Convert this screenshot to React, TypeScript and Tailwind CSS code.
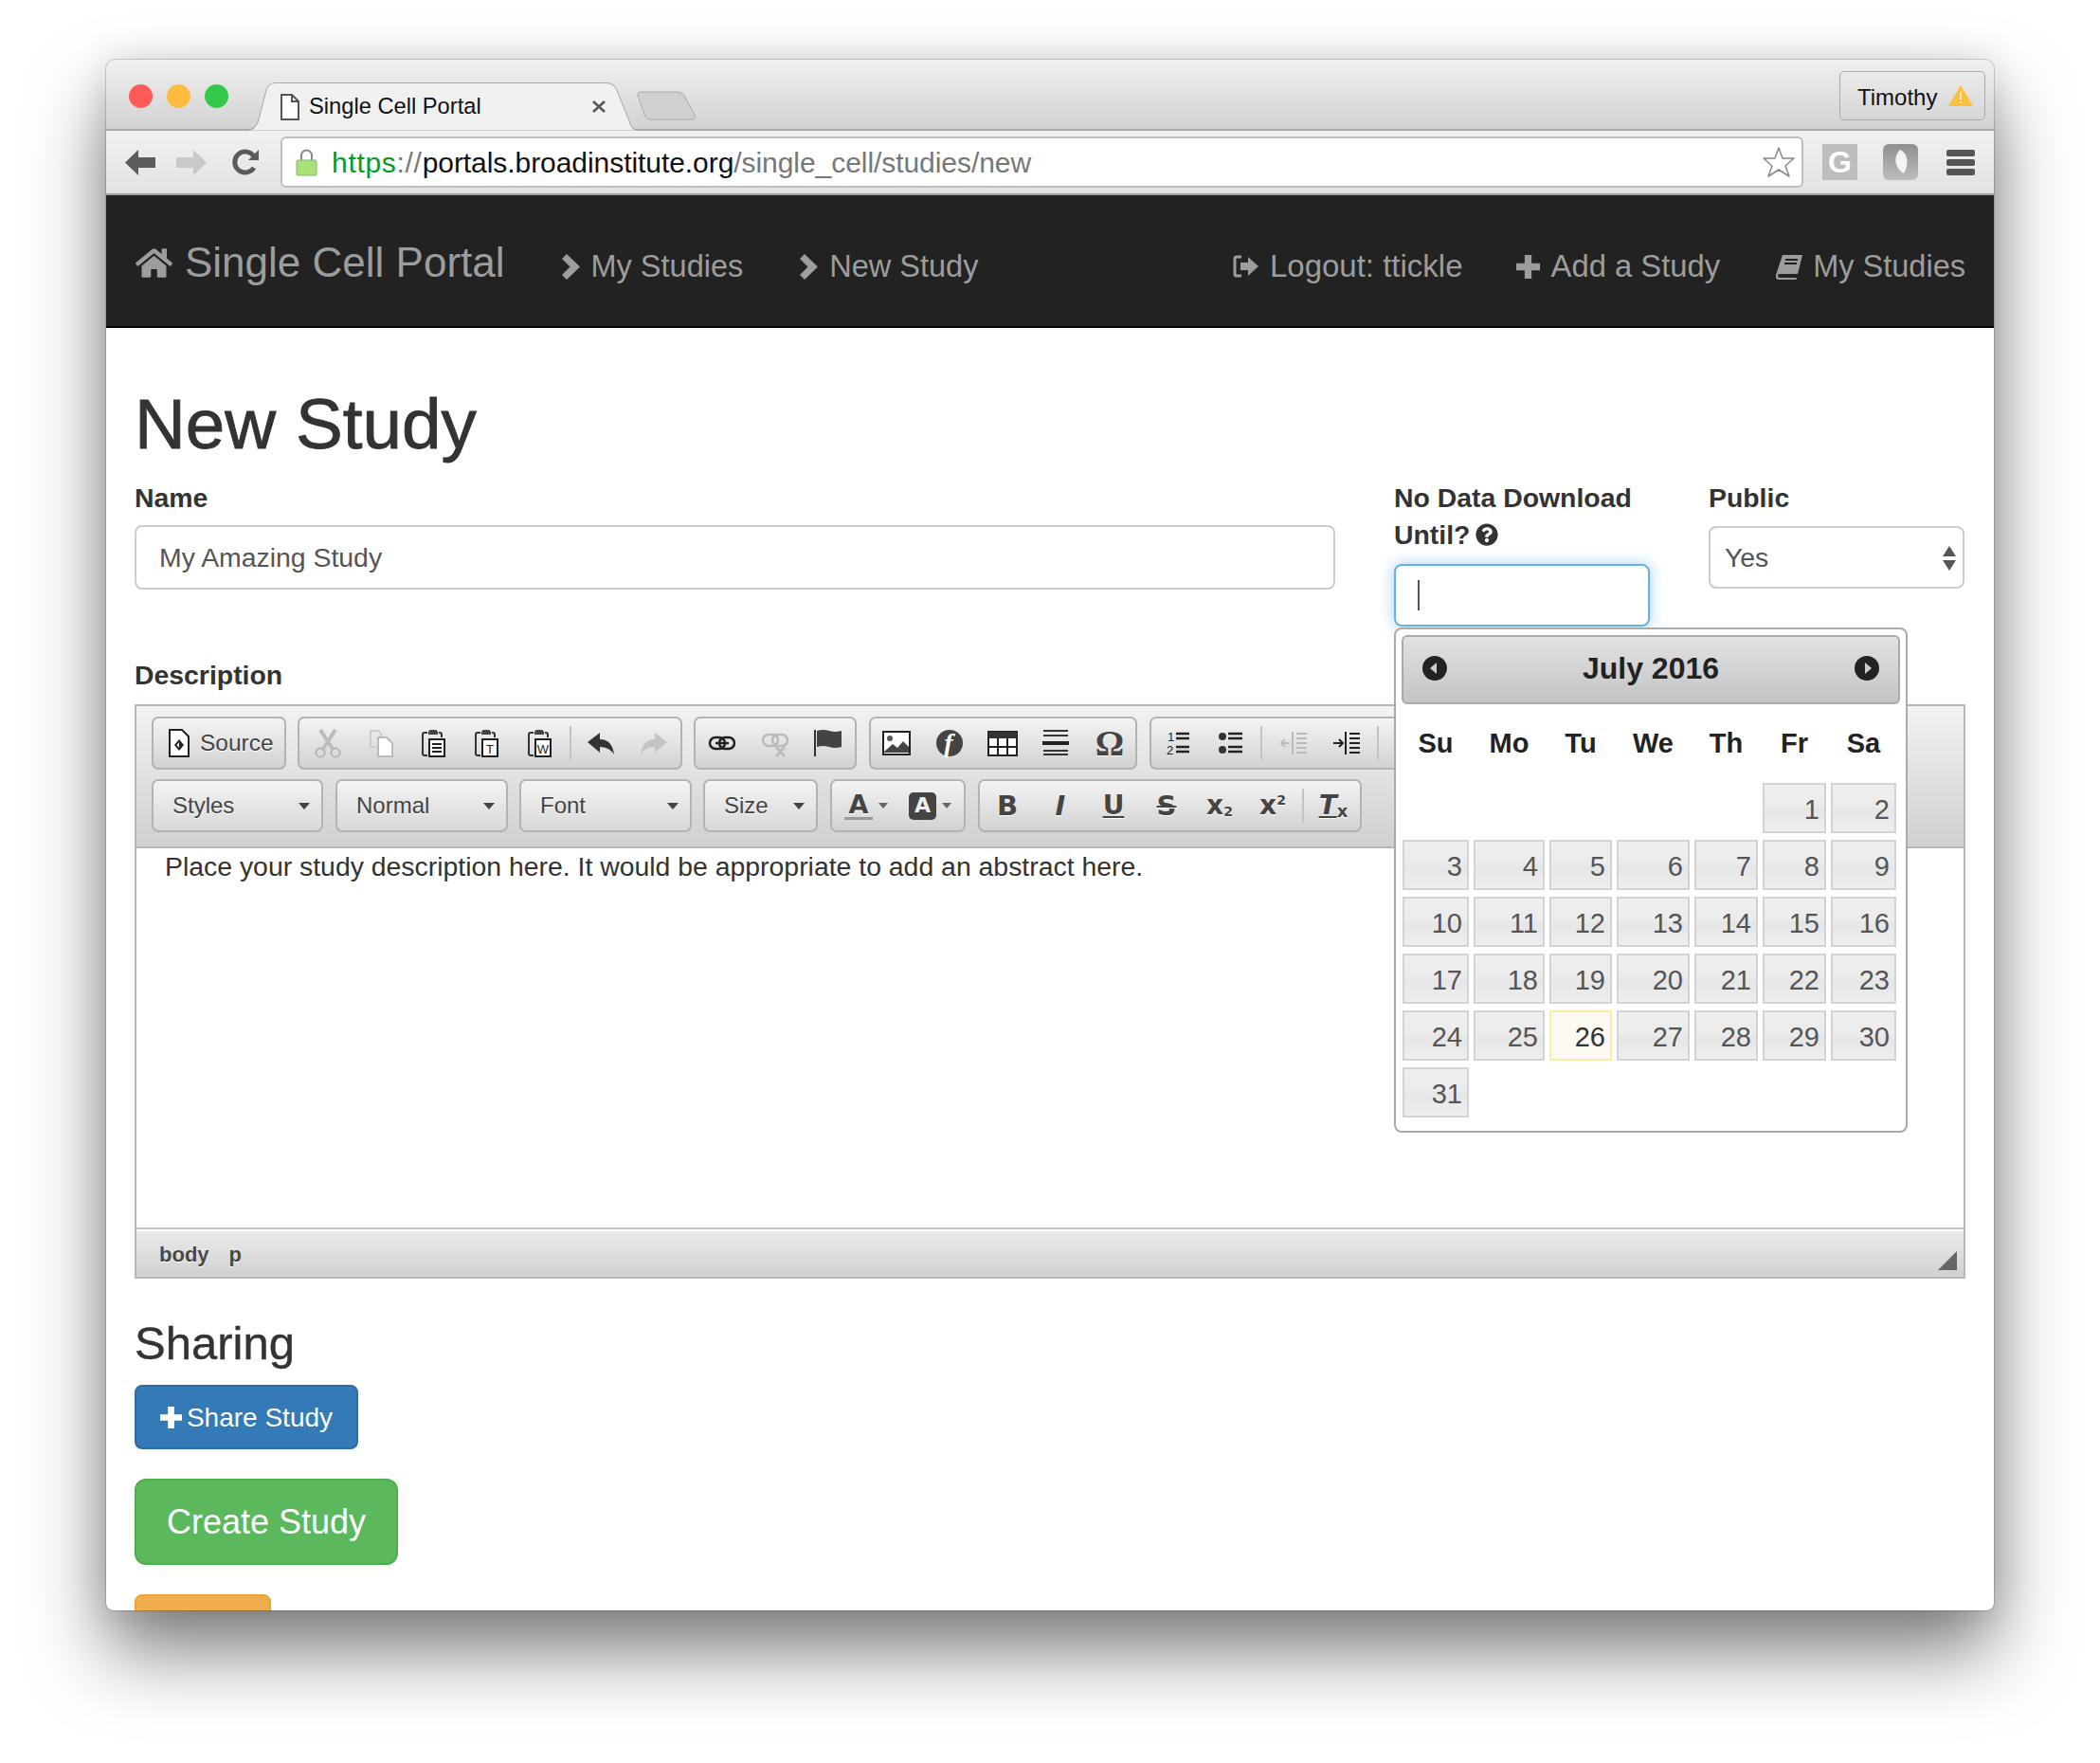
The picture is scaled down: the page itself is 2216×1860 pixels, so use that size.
import { FaHome, FaQuestionCircle } from "react-icons/fa";

const weeks = [
  [0, 0, 0, 0, 0, 1, 2],
  [3, 4, 5, 6, 7, 8, 9],
  [10, 11, 12, 13, 14, 15, 16],
  [17, 18, 19, 20, 21, 22, 23],
  [24, 25, 26, 27, 28, 29, 30],
  [31, 0, 0, 0, 0, 0, 0],
];

const grp = "flex h-[56px] items-center rounded-[7px] border-2 border-[#b3b3b3] bg-linear-to-b from-[#f4f4f4] to-[#d2d2d2] px-[2px]";
const btn = "flex h-[48px] w-[56px] shrink-0 items-center justify-center text-[#444]";
const glyph = "[font-family:'DejaVu_Sans',sans-serif] font-bold leading-none [text-shadow:0_1px_0_#fff]";

function Sep() {
  return (
    <div className="mx-[3px] h-[36px] w-[2px] shrink-0 bg-[#c4c4c4]" />
  );
}

function Ico({ children, w = 32, h = 32 }: { children: React.ReactNode; w?: number; h?: number }) {
  return (
    <svg width={w} height={h} viewBox={`0 0 ${w} ${h}`}>
      {children}
    </svg>
  );
}

function Plus({ size, color }: { size: number; color: string }) {
  return (
    <svg width={size} height={size} viewBox="0 0 24 24">
      <path d="M8.500 0h7v8.500H24v7h-8.500V24h-7v-8.500H0v-7h8.500z" fill={color} />
    </svg>
  );
}

function Chevron() {
  return (
    <svg width="19" height="27" viewBox="0 0 19 27">
      <path d="M5 0l14 13.500L5 27l-5-5 8.500-8.500L0 5z" fill="#9d9d9d" />
    </svg>
  );
}

function Clip({ letter }: { letter?: string }) {
  return (
    <Ico>
      <path d="M9 5H6a2 2 0 0 0-2 2v20a2 2 0 0 0 2 2h3" fill="none" stroke="#333" strokeWidth="2" />
      <path d="M10 5q0-3 3-3h4q3 0 3 3v2H10z" fill="#444" />
      <path d="M21 5h1q2 0 2 2v3" fill="none" stroke="#333" strokeWidth="2" />
      <rect x="11" y="12" width="16" height="18" fill="#fff" stroke="#222" strokeWidth="2" />
      {letter ? (
        <text x="19" y="27" fontSize="13" fontFamily="Liberation Sans" textAnchor="middle" fill="#222">
          {letter}
        </text>
      ) : (
        <path d="M14 17h10M14 21h10M14 25h10" stroke="#222" strokeWidth="2" />
      )}
    </Ico>
  );
}

function Combo({ label, w }: { label: string; w: string }) {
  return (
    <div className={`flex h-[56px] ${w} items-center justify-between rounded-[7px] border-2 border-[#b3b3b3] bg-linear-to-b from-[#f4f4f4] to-[#d8d8d8] pr-[12px] pl-[20px] text-[24px] text-[#444] [text-shadow:0_1px_0_#fff]`}>
      <span>{label}</span>
      <svg width="12" height="7" viewBox="0 0 12 7">
        <path d="M0 0h12L6 7z" fill="#444" />
      </svg>
    </div>
  );
}

function Toolbar() {
  return (
    <div className="h-[150px] overflow-hidden border-b-2 border-[#b6b6b6] bg-linear-to-b from-[#f2f2f2] to-[#cfd1cf] pt-[11px] pl-[16px]">
      <div className="flex h-[56px]">
        <div className={`${grp} w-[142px] shrink-0 text-[24.500px] text-[#444]`}>
          <div className="ml-[14px] flex items-center gap-[11px] [text-shadow:0_1px_0_#fff]">
            <Ico w={22} h={30}>
              <path d="M1 1h13l7 7v21H1z" fill="#fff" stroke="#222" strokeWidth="2" />
              <path d="M11 11l-5 6 5 6 5-6z" fill="#222" />
              <path d="M11 14l-2.500 3 2.500 3z" fill="#fff" />
            </Ico>
            <span>Source</span>
          </div>
        </div>
        <div className={`${grp} ml-[12px] w-[406px] shrink-0`}>
          <div className={btn}>
            <Ico>
              <path d="M8 2l13 20M24 2L11 22" stroke="#bbb" strokeWidth="4" />
              <circle cx="8" cy="26" r="4.500" fill="none" stroke="#bbb" strokeWidth="2.500" />
              <circle cx="24" cy="26" r="4.500" fill="none" stroke="#bbb" strokeWidth="2.500" />
            </Ico>
          </div>
          <div className={btn}>
            <Ico>
              <path d="M11 20H5V3h8l3 3v3" fill="none" stroke="#ccc" strokeWidth="2" />
              <path d="M13 10h9l6 6v14H13z" fill="#fff" stroke="#bbb" strokeWidth="2" />
            </Ico>
          </div>
          <div className={btn}><Clip /></div>
          <div className={btn}><Clip letter="T" /></div>
          <div className={btn}><Clip letter="W" /></div>
          <Sep />
          <div className={btn}>
            <Ico>
              <path d="M2 15L15 5v7q13 0 15 16q-5-8-15-8v6z" fill="#333" />
            </Ico>
          </div>
          <div className={btn}>
            <Ico>
              <path d="M30 15L17 5v7Q4 12 2 28q5-8 15-8v6z" fill="#c4c4c4" />
            </Ico>
          </div>
        </div>
        <div className={`${grp} ml-[12px] w-[172px] shrink-0`}>
          <div className={`${btn} -ml-[2px]`}>
            <Ico>
              <rect x="3" y="10" width="16" height="12" rx="6" fill="none" stroke="#222" strokeWidth="2.500" />
              <rect x="13" y="10" width="16" height="12" rx="6" fill="none" stroke="#222" strokeWidth="2.500" />
              <path d="M9 16h14" stroke="#222" strokeWidth="2.500" />
            </Ico>
          </div>
          <div className={btn}>
            <Ico>
              <rect x="3" y="7" width="16" height="12" rx="6" fill="none" stroke="#bbb" strokeWidth="2.500" />
              <rect x="13" y="7" width="16" height="12" rx="6" fill="none" stroke="#bbb" strokeWidth="2.500" />
              <path d="M17 20l9 10M26 20l-9 10" stroke="#bbb" strokeWidth="3" />
            </Ico>
          </div>
          <div className={btn}>
            <Ico>
              <path d="M2 2v28" stroke="#333" strokeWidth="2" />
              <path d="M4 3q7-2 13 0t13 0v17q-7 2-13 0t-13 0z" fill="#444" />
            </Ico>
          </div>
        </div>
        <div className={`${grp} ml-[13px] w-[283px] shrink-0`}>
          <div className={`${btn} -ml-[3px]`}>
            <Ico>
              <rect x="2" y="4" width="28" height="24" fill="#fff" stroke="#222" strokeWidth="2" />
              <circle cx="9" cy="11" r="3" fill="#555" />
              <path d="M3 25l9-8 5 4 6-7 6 6v6H3z" fill="#444" />
            </Ico>
          </div>
          <div className={btn}>
            <Ico>
              <circle cx="16" cy="16" r="14" fill="#444" />
              <text x="15" y="25" fontSize="28" fontStyle="italic" fontWeight="bold" fontFamily="Liberation Serif" textAnchor="middle" fill="#fff">
                f
              </text>
            </Ico>
          </div>
          <div className={btn}>
            <Ico>
              <rect x="1" y="4" width="30" height="25" fill="#fff" stroke="#222" strokeWidth="2" />
              <rect x="1" y="4" width="30" height="7" fill="#333" />
              <path d="M11 11v18M21 11v18M1 20h30" stroke="#222" strokeWidth="2" />
            </Ico>
          </div>
          <div className={btn}>
            <Ico>
              <path d="M3 3h26M3 8h26M3 24h26M3 28h26" stroke="#333" strokeWidth="2" />
              <rect x="2" y="14" width="28" height="4" fill="#222" />
            </Ico>
          </div>
          <div className={`${btn} pl-[2px]`}>
            <span className="[font-family:'Liberation_Serif',serif] text-[38px] leading-none font-bold text-[#444] [text-shadow:0_1px_0_#fff]">Ω</span>
          </div>
        </div>
        <div className={`${grp} ml-[13px] w-[300px] shrink-0`}>
          <div className={`${btn} -ml-[2px]`}>
            <Ico>
              <text x="5" y="14" fontSize="13" fontFamily="Liberation Sans" fill="#222">1</text>
              <text x="4" y="28" fontSize="13" fontFamily="Liberation Sans" fill="#222">2</text>
              <path d="M14 6h14M14 11h14M14 20h14M14 25h14" stroke="#222" strokeWidth="2.500" />
            </Ico>
          </div>
          <div className={btn}>
            <Ico>
              <circle cx="7" cy="9" r="4" fill="#333" />
              <circle cx="7" cy="23" r="4" fill="#333" />
              <path d="M13 6h15M13 11h15M13 20h15M13 25h15" stroke="#222" strokeWidth="2.500" />
            </Ico>
          </div>
          <Sep />
          <div className={`${btn} ml-[3px]`}>
            <Ico>
              <path d="M14 4v24" stroke="#bbb" strokeWidth="2" />
              <path d="M18 6h11M18 11h11M18 16h11M18 21h11M18 26h11" stroke="#bbb" strokeWidth="2" />
              <path d="M2 16h9M6 12l-4 4 4 4" fill="none" stroke="#bbb" strokeWidth="2" />
            </Ico>
          </div>
          <div className={btn}>
            <Ico>
              <path d="M14 4v24" stroke="#222" strokeWidth="2" />
              <path d="M18 6h11M18 11h11M18 16h11M18 21h11M18 26h11" stroke="#222" strokeWidth="2" />
              <path d="M1 16h9M7 12l4 4-4 4" fill="none" stroke="#222" strokeWidth="2" />
            </Ico>
          </div>
          <Sep />
        </div>
      </div>
      <div className="mt-[10px] flex h-[56px]">
        <Combo label="Styles" w="w-[181px]" />
        <div className="ml-[13px]"><Combo label="Normal" w="w-[182px]" /></div>
        <div className="ml-[12px]"><Combo label="Font" w="w-[182px]" /></div>
        <div className="ml-[12px]"><Combo label="Size" w="w-[121px]" /></div>
        <div className={`${grp} ml-[13px] w-[143px] shrink-0 justify-center gap-[6px]`}>
          <div className="flex flex-col items-center">
            <span className={`${glyph} text-[27px] text-[#444]`}>A</span>
            <span className="h-[3px] w-[30px] bg-[#999]" />
          </div>
          <svg width="10" height="6" viewBox="0 0 10 6"><path d="M0 0h10L5 6z" fill="#666" /></svg>
          <div className="ml-[16px] flex size-[29px] items-center justify-center rounded-[5px] bg-[#444]">
            <span className="[font-family:'DejaVu_Sans',sans-serif] text-[22px] leading-none font-bold text-[#eee]">A</span>
          </div>
          <svg width="10" height="6" viewBox="0 0 10 6"><path d="M0 0h10L5 6z" fill="#666" /></svg>
        </div>
        <div className={`${grp} ml-[13px] w-[405px] shrink-0`}>
          <div className={`${btn} -ml-[1px]`}><span className={`${glyph} text-[29px]`}>B</span></div>
          <div className={btn}><span className={`${glyph} text-[29px] italic`}>I</span></div>
          <div className={btn}><span className={`${glyph} text-[28px] underline underline-offset-2`}>U</span></div>
          <div className={btn}><span className={`${glyph} text-[29px] line-through`}>S</span></div>
          <div className={btn}>
            <span className={`${glyph} text-[28px]`}>x</span>
            <span className={`${glyph} mt-[12px] text-[14px]`}>2</span>
          </div>
          <div className={btn}>
            <span className={`${glyph} text-[28px]`}>x</span>
            <span className={`${glyph} mb-[12px] text-[14px]`}>2</span>
          </div>
          <Sep />
          <div className={btn}>
            <span className={`${glyph} text-[28px] italic underline underline-offset-2`}>T</span>
            <span className={`${glyph} mt-[12px] text-[18px]`}>x</span>
          </div>
        </div>
      </div>
    </div>
  );
}

function DatePicker() {
  const cols = ["Su", "Mo", "Tu", "We", "Th", "Fr", "Sa"];
  const grid = "grid grid-cols-[70px_75px_66px_77px_67px_67px_69px] gap-x-[5px]";
  return (
    <div className="absolute top-[157px] left-0 z-10 h-[533px] w-[542px] rounded-[8px] border-2 border-[#aaa] bg-white p-[6px]">
      <div className="flex h-[73px] items-center justify-between rounded-[6px] border-2 border-[#aaa] bg-linear-to-b from-[#e2e2e2] to-[#c4c4c4] px-[20px] pb-[3px] text-[32px] font-bold text-[#222]">
        <svg width="26" height="26" viewBox="0 0 26 26">
          <circle cx="13" cy="13" r="13" fill="#222" />
          <path d="M15 7v12l-7-6z" fill="#ccc" />
        </svg>
        <span>July 2016</span>
        <svg width="26" height="26" viewBox="0 0 26 26">
          <circle cx="13" cy="13" r="13" fill="#222" />
          <path d="M11 7v12l7-6z" fill="#ccc" />
        </svg>
      </div>
      <div className={`${grid} h-[83px] items-center pl-[1px] text-center text-[29px] font-bold text-[#222]`}>
        {cols.map((c) => (
          <div key={c}>{c}</div>
        ))}
      </div>
      <div className="flex flex-col gap-y-[7px] pl-[1px]">
        {weeks.map((wk, i) => (
          <div key={i} className={grid}>
            {wk.map((d, j) =>
              d === 0 ? (
                <div key={j} className="h-[53px]" />
              ) : (
                <div
                  key={j}
                  className={
                    d === 26
                      ? "h-[53px] border-2 border-[#fbeea8] bg-[#fcfaf2] pr-[5px] text-right text-[29px] leading-[52px] text-[#333]"
                      : "h-[53px] border-2 border-[#d3d3d3] bg-[linear-gradient(#eeeeee,#ececec_45%,#e6e6e6_55%,#eeeeee)] pr-[5px] text-right text-[29px] leading-[52px] text-[#555]"
                  }
                >
                  {d}
                </div>
              ),
            )}
          </div>
        ))}
      </div>
    </div>
  );
}

function NavItem({ icon, label, cls }: { icon: React.ReactNode; label: string; cls: string }) {
  return (
    <div className={`flex items-center gap-[12px] pt-[12px] ${cls}`}>
      {icon}
      <span>{label}</span>
    </div>
  );
}

export default function App() {
  return (
    <div className="h-[1860px] w-[2216px] overflow-hidden bg-white pt-[63px] pl-[112px] [font-family:'Liberation_Sans',Arial,sans-serif]">
      <div className="h-[1636px] w-[1992px] overflow-hidden rounded-t-[10px] rounded-b-[8px] bg-white shadow-[0_0_0_1px_rgba(0,0,0,0.16),0_0_40px_rgba(0,0,0,0.12),0_44px_80px_rgba(0,0,0,0.5)]">
        {/* browser chrome */}
        <div className="flex h-[75px] items-end border-b-2 border-[#a8a8a8] bg-linear-to-b from-[#f0f0f0] to-[#d2d2d2]">
          <div className="mt-[26px] ml-[24px] flex gap-[15px] self-start">
            <div className="size-[25px] rounded-full bg-[#fc5b57]" />
            <div className="size-[25px] rounded-full bg-[#fdbc40]" />
            <div className="size-[25px] rounded-full bg-[#34c84a]" />
          </div>
          <div className="relative z-[1] mb-[-2px] ml-[18px] flex h-[51px] w-[415px] items-center pr-[34px] pl-[37px]">
            <svg className="absolute inset-0" width="415" height="51" viewBox="0 0 415 50" preserveAspectRatio="none">
              <path d="M0 49.500C8 49.500 12 46 14 38L22 8C24 2 27 .5 32 .5H380C386 .5 390 2 392 8L405 40C407 47 410 49.500 415 49.500" fill="#f0f0f0" stroke="#a8a8a8" />
            </svg>
            <svg className="relative" width="20" height="28" viewBox="0 0 20 28">
              <path d="M1 1h11l7 7v19H1z" fill="#fff" stroke="#555" strokeWidth="2" />
              <path d="M12 1v7h7" fill="none" stroke="#555" strokeWidth="2" />
            </svg>
            <span className="relative ml-[10px] text-[23.700px] text-[#111]">Single Cell Portal</span>
            <svg className="relative ml-auto" width="16" height="13" viewBox="0 0 16 13">
              <path d="M2 1l12 11M14 1L2 12" stroke="#555" strokeWidth="2.500" />
            </svg>
          </div>
          <svg className="mb-[9px] -ml-[2px]" width="64" height="31" viewBox="0 0 64 31">
            <path d="M1 5q-1-4 4-4h38q6 0 8 6l10 18q2 5-4 5H15q-5 0-7-5z" fill="#d0d0d0" stroke="#aaa" />
          </svg>
          <div className="mr-[9px] mb-[9px] ml-auto flex h-[52px] w-[154px] items-center rounded-[5px] border border-[#a8a8a8] pt-[3px] pl-[18px] text-[24px] text-[#111]">
            <span>Timothy</span>
            <svg className="ml-[12px] -mt-[3px]" width="26" height="22" viewBox="0 0 26 22">
              <path d="M13 0L26 22H0z" fill="#fdc03c" />
              <path d="M13 7v8M13 17v2" stroke="#fff" strokeWidth="1.500" />
            </svg>
          </div>
        </div>
        <div className="flex h-[68px] items-center border-b-2 border-[#a0a0a0] bg-linear-to-b from-[#f1f1f1] to-[#e2e2e2] pl-[20px]">
          <svg width="32" height="27" viewBox="0 0 32 27">
            <path d="M0 13.500L14 0v8h18v11H14v8z" fill="#5c5c5c" />
          </svg>
          <svg className="ml-[22px]" width="32" height="27" viewBox="0 0 32 27">
            <path d="M32 13.500L18 0v8H0v11h18v8z" fill="#c9c9c9" />
          </svg>
          <svg className="ml-[27px]" width="28" height="28" viewBox="0 0 28 28">
            <path d="M23 20a11 11 0 1 1 0-12" fill="none" stroke="#5a5a5a" strokeWidth="5" />
            <path d="M17 12L28 1v11z" fill="#5a5a5a" />
          </svg>
          <div className="ml-[23px] flex h-[54px] w-[1607px] items-center rounded-[6px] border-2 border-[#bdbdbd] bg-white pl-[14px] text-[30px] whitespace-nowrap">
            <svg width="23" height="29" viewBox="0 0 23 29">
              <path d="M6 13V7a5.500 5.500 0 0 1 11 0v6" fill="none" stroke="#888" strokeWidth="2" />
              <rect x="1" y="12" width="21" height="16" rx="1" fill="#a9e07a" stroke="#8ab56a" />
            </svg>
            <span className="ml-[15px]">
              <span className="tracking-[0.7px] text-[#0b9a1e]">https</span>
              <span className="tracking-[0.7px] text-[#777]">://</span>
              <span className="tracking-[-0.06px] text-[#111]">portals.broadinstitute.org</span>
              <span className="tracking-[-0.06px] text-[#777]">/single_cell/studies/new</span>
            </span>
            <svg className="mr-[6px] ml-auto" width="36" height="34" viewBox="0 0 36 34">
              <path d="M18 2l4 11h12l-9 8 4 11-11-7-11 7 4-11-9-8h12z" fill="#fff" stroke="#888" strokeWidth="1.500" strokeLinejoin="round" />
            </svg>
          </div>
          <div className="ml-[20px] flex h-[38px] w-[37px] items-center justify-center bg-[#bdbdbd] text-[32px] font-bold text-white">G</div>
          <div className="ml-[27px] flex h-[38px] w-[37px] items-center justify-center rounded-[6px] bg-linear-to-b from-[#8f8f8f] to-[#bdbdbd]">
            <svg width="20" height="28" viewBox="0 0 20 28">
              <path d="M9 1c8 3 10 15 4 25C4 21 1 9 9 1z" fill="#f4f4f4" />
            </svg>
          </div>
          <div className="ml-[30px] flex w-[30px] flex-col gap-[3px]">
            <div className="h-[7px] rounded-[2px] bg-[#555]" />
            <div className="h-[7px] rounded-[2px] bg-[#555]" />
            <div className="h-[7px] rounded-[2px] bg-[#555]" />
          </div>
        </div>
        {/* site nav */}
        <div className="flex h-[140px] items-center border-b-2 border-black bg-[#222] pr-[30px] pl-[31px] whitespace-nowrap text-[#9d9d9d]">
          <div className="flex items-center pt-[4px]">
            <FaHome className="size-[39px]" />
            <span className="ml-[13px] text-[44px]">Single Cell Portal</span>
          </div>
          <NavItem cls="ml-[60px] text-[32.500px]" icon={<Chevron />} label="My Studies" />
          <NavItem cls="ml-[60px] text-[32.500px]" icon={<Chevron />} label="New Study" />
          <div className="ml-auto flex items-center">
            <NavItem
              cls="text-[33px]"
              icon={
                <svg width="27" height="24" viewBox="0 0 27 24">
                  <path d="M9 2H4Q2 2 2 4v16q0 2 2 2h5" fill="none" stroke="#9d9d9d" strokeWidth="3" />
                  <path d="M8 8h8V2l11 10-11 10v-6H8z" fill="#9d9d9d" />
                </svg>
              }
              label="Logout: ttickle"
            />
            <NavItem cls="ml-[56px] text-[32.800px]" icon={<Plus size={25} color="#9d9d9d" />} label="Add a Study" />
            <NavItem
              cls="ml-[59px] text-[32.500px]"
              icon={
                <svg className="-mr-[2px]" width="29" height="27" viewBox="0 0 29 27">
                  <path d="M7 1h21l-5 20H4q-2 0-2 2t2 2h18l-.5 2H3q-4 0-3-5z" fill="#9d9d9d" />
                  <path d="M10 6h13M9 10h13" stroke="#222" strokeWidth="2" />
                </svg>
              }
              label="My Studies"
            />
          </div>
        </div>
        {/* page */}
        <div className="w-[1962px] pt-[61px] pl-[30px] text-[28.400px] text-[#333]">
          <h1 className="text-[74.600px] leading-[80px] [-webkit-text-stroke:0.9px_#333]">New Study</h1>
          <div className="mt-[18px] grid grid-cols-[1267px_270px_270px] gap-x-[62px]">
            <div>
              <div className="leading-[40px] font-bold">Name</div>
              <div className="mt-[9px] flex h-[68px] items-center rounded-[8px] border-2 border-[#ccc] pt-[1px] pl-[24px] text-[#555]">My Amazing Study</div>
            </div>
            <div className="relative">
              <div className="leading-[40px] font-bold">
                No Data Download
                <div className="-mt-[1px] flex items-center gap-[6px]">
                  Until?
                  <FaQuestionCircle className="size-[24px]" />
                </div>
              </div>
              <div className="mt-[11px] flex h-[66px] items-center rounded-[8px] border-2 border-[#66afe9] pl-[23px] shadow-[0_0_16px_rgba(102,175,233,0.6)]">
                <div className="h-[32px] w-[2px] bg-[#555]" />
              </div>
              <DatePicker />
            </div>
            <div>
              <div className="leading-[40px] font-bold">Public</div>
              <div className="mt-[10px] flex h-[66px] items-center justify-between rounded-[8px] border-2 border-[#ccc] pt-[1px] pr-[7px] pl-[15px] text-[#555]">
                <span>Yes</span>
                <svg width="14" height="26" viewBox="0 0 14 26">
                  <path d="M7 0l7 11H0zM7 26l7-11H0z" fill="#555" />
                </svg>
              </div>
            </div>
          </div>
          <div className="mt-[31px] leading-[40px] font-bold">Description</div>
          <div className="mt-[11px] h-[606px] border-2 border-[#b6b6b6]">
            <Toolbar />
            <div className="h-[402px] border-b-2 border-[#c4c4c4] pl-[30px] leading-[38px] text-[#333]">
              Place your study description here. It would be appropriate to add an abstract here.
            </div>
            <div className="relative flex h-[50px] items-center gap-[21px] border-t-2 border-white bg-linear-to-b from-[#ebebeb] to-[#cfd1cf] pl-[24px] text-[22px] font-bold text-[#484848] [text-shadow:0_1px_0_#fff]">
              <span>body</span>
              <span>p</span>
              <svg className="absolute right-[7px] bottom-[7px]" width="20" height="20" viewBox="0 0 20 20">
                <path d="M20 0v20H0z" fill="#666" />
              </svg>
            </div>
          </div>
          <h2 className="mt-[38px] text-[49px] leading-[60px] [-webkit-text-stroke:0.4px_#333]">Sharing</h2>
          <div className="mt-[14px] flex h-[68px] w-[236px] items-center justify-center gap-[5px] rounded-[8px] border-2 border-[#2e6da4] bg-[#337ab7] pt-[1px] text-[28px] text-white">
            <Plus size={23} color="#fff" />
            <span>Share Study</span>
          </div>
          <div className="mt-[31px] flex h-[91px] w-[278px] items-center justify-center rounded-[12px] border-2 border-[#4cae4c] bg-[#5cb85c] text-[36px] text-white">Create Study</div>
          <div className="mt-[31px] h-[68px] w-[144px] rounded-[8px] border-2 border-[#eea236] bg-[#f0ad4e]" />
        </div>
      </div>
    </div>
  );
}
